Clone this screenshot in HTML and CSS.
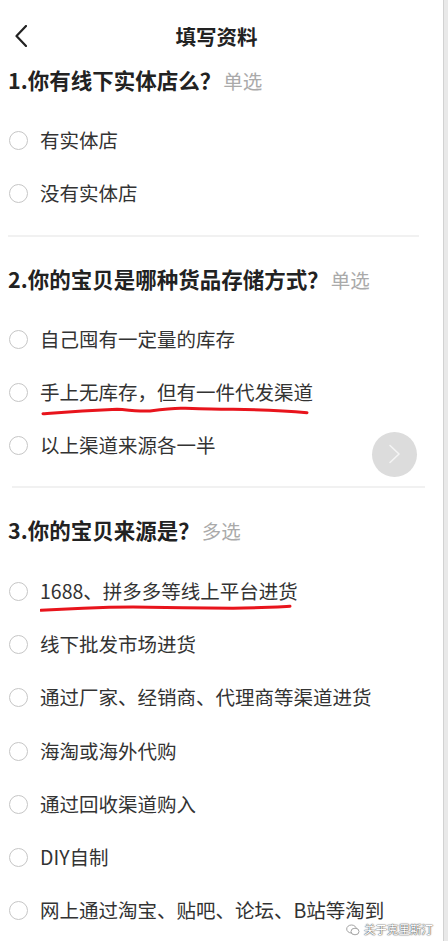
FILE: index.html
```html
<!DOCTYPE html>
<html lang="zh-CN">
<head>
    <meta charset="UTF-8">
    <meta name="viewport" content="width=device-width, initial-scale=1.0">
    <title>填写资料</title>
    <link rel="stylesheet" href="styles.css">
</head>
<body>
    <div class="page">
        <header class="topbar">
            <a class="back" href="#">
                <svg width="12" height="22" viewBox="0 0 12 22"><polyline points="11,1 1.5,11 11,21" fill="none" stroke="#222" stroke-width="2.2" stroke-linecap="round" stroke-linejoin="round"/></svg>
            </a>
            <h1 class="title">填写资料</h1>
            <span></span>
        </header>

        <section class="question">
            <h2 class="q-title">1.你有线下实体店么？<span class="q-type">单选</span></h2>
            <ul class="options">
                <li class="option"><span class="radio"></span><span class="label">有实体店</span></li>
                <li class="option"><span class="radio"></span><span class="label">没有实体店</span></li>
            </ul>
        </section>
        <div class="divider"></div>

        <section class="question q-store">
            <h2 class="q-title">2.你的宝贝是哪种货品存储方式？<span class="q-type">单选</span></h2>
            <ul class="options">
                <li class="option"><span class="radio"></span><span class="label">自己囤有一定量的库存</span></li>
                <li class="option"><span class="radio"></span><span class="label">手上无库存，但有一件代发渠道
                    <svg class="mark mark-store" width="280" height="12" viewBox="0 0 280 12"><path d="M3,7.7 C20,6.5 40,5 77,3.3 C95,4.5 105,5.5 110,5 C125,3 135,2 143,2.3 C165,3 180,3.5 193,3.3 C220,3.6 250,5 267,6.7" fill="none" stroke="#e8141c" stroke-width="3" stroke-linecap="round"/></svg>
                </span></li>
                <li class="option"><span class="radio"></span><span class="label">以上渠道来源各一半</span></li>
            </ul>
            <a class="next" href="#">
                <svg width="14" height="20" viewBox="0 0 14 20"><polyline points="2,1.5 11,10 2,18.5" fill="none" stroke="#f4f4f4" stroke-width="1.6" stroke-linecap="round" stroke-linejoin="round"/></svg>
            </a>
        </section>
        <div class="divider divider-alt"></div>

        <section class="question">
            <h2 class="q-title">3.你的宝贝来源是？<span class="q-type">多选</span></h2>
            <ul class="options">
                <li class="option"><span class="radio"></span><span class="label">1688、拼多多等线上平台进货
                    <svg class="mark mark-source" width="260" height="12" viewBox="0 0 260 12"><path d="M1,7.3 C15,6.5 30,5.8 43,5.3 C60,4.5 80,4 93,4 C110,4.2 130,4.6 143,4.7 C165,5 180,5.2 193,5.3 C215,5 235,4 250,3.3" fill="none" stroke="#e8141c" stroke-width="3" stroke-linecap="round"/></svg>
                </span></li>
                <li class="option"><span class="radio"></span><span class="label">线下批发市场进货</span></li>
                <li class="option"><span class="radio"></span><span class="label">通过厂家、经销商、代理商等渠道进货</span></li>
                <li class="option"><span class="radio"></span><span class="label">海淘或海外代购</span></li>
                <li class="option"><span class="radio"></span><span class="label">通过回收渠道购入</span></li>
                <li class="option"><span class="radio"></span><span class="label">DIY自制</span></li>
                <li class="option"><span class="radio"></span><span class="label">网上通过淘宝、贴吧、论坛、B站等淘到</span></li>
            </ul>
        </section>

        <div class="watermark">
            <svg width="14" height="12" viewBox="0 0 14 12"><ellipse cx="5.5" cy="5" rx="4.8" ry="4" fill="none" stroke="#999" stroke-width="0.9"/><ellipse cx="9" cy="7.5" rx="4" ry="3.3" fill="#fff" stroke="#999" stroke-width="0.9"/></svg>
            <span>关于克里斯汀</span>
        </div>
    </div>
</body>
</html>
```

FILE: styles.css
```css
/* Страница анкеты */
html {
    background-color: #e9e9e9;
}

body {
    margin: 0;
    font-family: "Noto Sans CJK SC", "Noto Sans", sans-serif;
    color: #333;
}

.page {
    position: relative;
    width: 444px;
    height: 941px;
    overflow: hidden;
    background-color: #fff;
    border-right: 1px solid #d2d2d2;
    box-sizing: border-box;
}

.topbar {
    display: grid;
    grid-template-columns: 44px 1fr 54px;
    align-items: center;
    height: 60px;
    padding-top: 6px;
}

.back {
    display: flex;
    padding-left: 15px;
}

.title {
    margin: 0;
    text-align: center;
    font-size: 20.5px;
    font-weight: bold;
    color: #222;
    line-height: 30px;
}

.question {
    position: relative;
}

.q-title {
    margin: 0;
    padding-left: 8px;
    height: 30px;
    font-size: 21.5px;
    font-weight: bold;
    color: #222;
    line-height: 28px;
}

.q-type {
    margin-left: 2px;
    font-size: 19.5px;
    font-weight: normal;
    line-height: 1;
    color: #aaa;
}

.options {
    list-style: none;
    margin: 0;
    padding: 18px 0 14px;
}

.option {
    display: flex;
    align-items: center;
    gap: 12px;
    height: 53.3px;
    padding-left: 9px;
}

.radio {
    width: 19px;
    height: 19px;
    border: 1.2px solid #c6c6c6;
    border-radius: 50%;
    box-sizing: border-box;
    flex-shrink: 0;
}

.label {
    position: relative;
    font-size: 19.5px;
    line-height: 25px;
    color: #333;
    white-space: nowrap;
    margin-top: -2px;
}

/* красные пометки от руки */
.mark {
    position: absolute;
    left: 0;
}

.mark-store {
    top: 27px;
}

.mark-source {
    top: 25px;
}

.divider {
    height: 2px;
    margin: 0 24px 28px 8px;
    background-color: #f1f1f1;
}

.divider-alt {
    margin-left: 12px;
    margin-right: 18px;
}

.next {
    position: absolute;
    top: 167px;
    right: 26px;
    width: 45px;
    height: 45px;
    border-radius: 50%;
    background-color: #dcdcdc;
    display: flex;
    align-items: center;
    justify-content: center;
}

.watermark {
    position: absolute;
    right: 10px;
    bottom: 5px;
    display: flex;
    align-items: center;
    gap: 4px;
    font-size: 11.5px;
    line-height: 13px;
    color: #fff;
    text-shadow: 0 0 1px #555, 0 0 1px #555, 0 0 2px #888;
}
```
